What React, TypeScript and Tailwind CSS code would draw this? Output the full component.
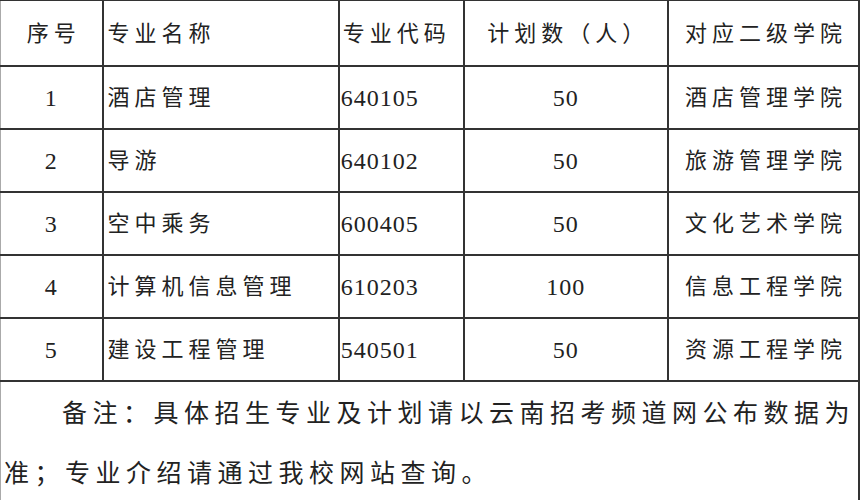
const rows = [
  { no: '1', name: '酒店管理', code: '640105', plan: '50', college: '酒店管理学院' },
  { no: '2', name: '导游', code: '640102', plan: '50', college: '旅游管理学院' },
  { no: '3', name: '空中乘务', code: '600405', plan: '50', college: '文化艺术学院' },
  { no: '4', name: '计算机信息管理', code: '610203', plan: '100', college: '信息工程学院' },
  { no: '5', name: '建设工程管理', code: '540501', plan: '50', college: '资源工程学院' },
]

const cell = 'border-2 border-[#333] p-0 align-middle'
const cjk = 'text-[22px] tracking-[5px]'
const num = 'text-[24px] tracking-[1px]'

export default function App() {
  return (
    <div
      className="w-[862px] h-[500px] overflow-hidden bg-white text-[#222]"
      style={{ fontFamily: '"Liberation Serif", "Noto Sans CJK SC", serif' }}
    >
      <table className="table-fixed border-collapse w-[860px] -mt-[1px]">
        <colgroup>
          <col className="w-[102px]" />
          <col className="w-[236px]" />
          <col className="w-[125px]" />
          <col className="w-[204px]" />
          <col className="w-[191px]" />
        </colgroup>
        <thead>
          <tr className="h-[66px]">
            <th className={`${cell} border-l-[#aaa] border-l-[1px] font-normal text-center pl-[5px] ${cjk}`}>序号</th>
            <th className={`${cell} font-normal text-left pl-[4px] ${cjk}`}>专业名称</th>
            <th className={`${cell} font-normal text-left pl-[3px] ${cjk}`}>专业代码</th>
            <th className={`${cell} font-normal text-center pl-[5px] ${cjk}`}>计划数（人）</th>
            <th className={`${cell} font-normal text-center pl-[5px] ${cjk}`}>对应二级学院</th>
          </tr>
        </thead>
        <tbody>
          {rows.map((r) => (
            <tr key={r.no} className="h-[63px]">
              <td className={`${cell} border-l-[#aaa] border-l-[1px] text-center ${num}`}>{r.no}</td>
              <td className={`${cell} text-left pl-[4px] ${cjk}`}>{r.name}</td>
              <td className={`${cell} text-left pl-[1px] ${num}`}>{r.code}</td>
              <td className={`${cell} text-center ${num}`}>{r.plan}</td>
              <td className={`${cell} text-center pl-[5px] ${cjk}`}>{r.college}</td>
            </tr>
          ))}
          <tr className="h-[140px]">
            <td colSpan={5} className={`${cell} border-l-[#aaa] border-l-[1px] align-top pt-[2px] pl-[3px]`}>
              <div className="text-[25px] tracking-[5.5px] leading-[60px] whitespace-nowrap">
                <span className="pl-[58px]">备注：具体招生专业及计划请以云南招考频道网公布数据为</span>
                <br />
                准；专业介绍请通过我校网站查询。
              </div>
            </td>
          </tr>
        </tbody>
      </table>
    </div>
  )
}
